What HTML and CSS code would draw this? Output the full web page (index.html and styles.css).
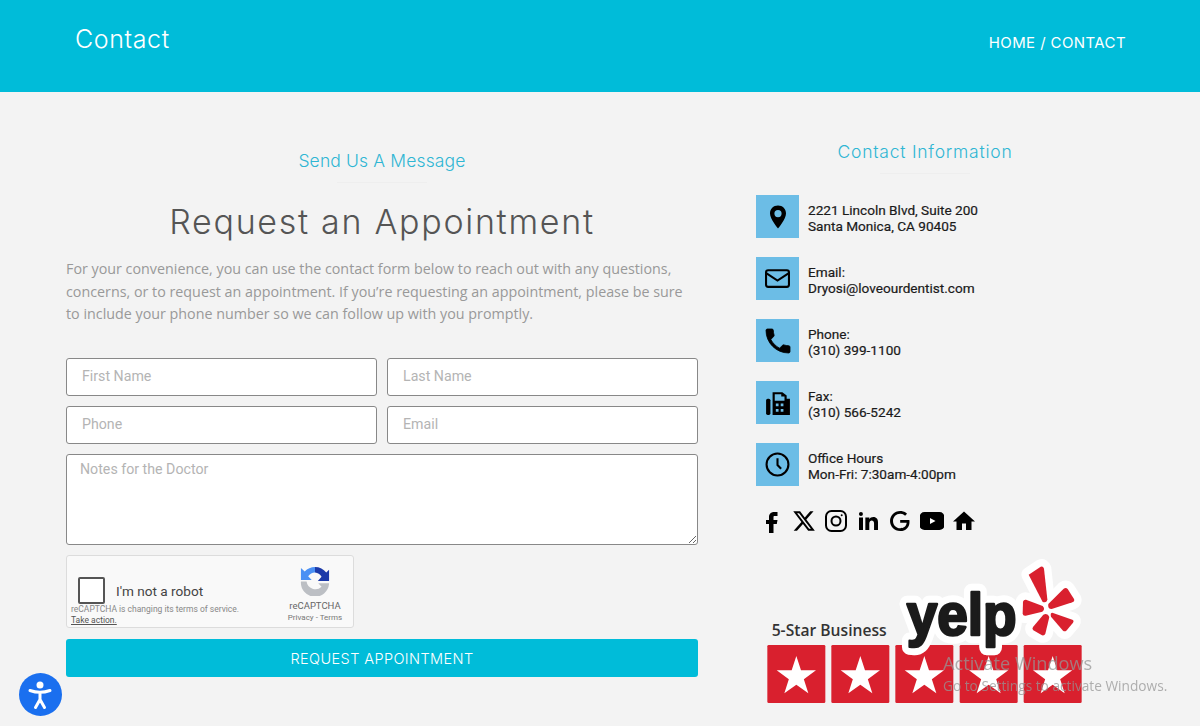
FILE: index.html
```html
<!DOCTYPE html>
<html lang="en">
<head>
    <meta charset="UTF-8">
    <meta name="viewport" content="width=device-width, initial-scale=1.0">
    <title>Contact</title>
    <link rel="stylesheet" href="styles.css">
</head>
<body>
    <header class="page-header">
        <h1>Contact</h1>
        <nav class="crumbs">HOME / CONTACT</nav>
    </header>

    <main class="content">
        <section class="message-col">
            <h2 class="eyebrow">Send Us A Message</h2>
            <div class="rule"></div>
            <h3 class="form-title">Request an Appointment</h3>
            <p class="intro">For your convenience, you can use the contact form below to reach out with any questions, concerns, or to request an appointment. If you’re requesting an appointment, please be sure to include your phone number so we can follow up with you promptly.</p>

            <form class="contact-form">
                <div class="form-row">
                    <input type="text" placeholder="First Name">
                    <input type="text" placeholder="Last Name">
                </div>
                <div class="form-row">
                    <input type="text" placeholder="Phone">
                    <input type="text" placeholder="Email">
                </div>
                <textarea placeholder="Notes for the Doctor"></textarea>

                <div class="captcha">
                    <div class="captcha-left">
                        <div class="captcha-check">
                            <span class="captcha-box"></span>
                            <span class="captcha-label">I'm not a robot</span>
                        </div>
                        <div class="captcha-notice">reCAPTCHA is changing its terms of service.<br><u>Take action.</u></div>
                    </div>
                    <div class="captcha-brand">
                        <svg class="captcha-logo" viewBox="0 0 32 32">
                            <path d="M16 1a15 15 0 0 0-11 4.800L1 2v13h11.500l-3.800-4a10 10 0 0 1 7.300-4z" fill="#4a90f4"/>
                            <path d="M16 1a15 15 0 0 1 12 6l3-3v12H19l4-4.500A9.500 9.500 0 0 0 16 7z" fill="#1c3aa9"/>
                            <path d="M1 16.500h6a9.500 9.500 0 0 0 16 5.500l-3.500-3.500H31v.5a15 15 0 0 1-30-2.500z" fill="#bcbfc4"/>
                        </svg>
                        <div class="captcha-name">reCAPTCHA</div>
                        <div class="captcha-links">Privacy - Terms</div>
                    </div>
                </div>

                <button type="submit">REQUEST APPOINTMENT</button>
            </form>
        </section>

        <aside class="info-col">
            <h2 class="eyebrow eyebrow-wide">Contact Information</h2>
            <div class="rule"></div>

            <ul class="info-list">
                <li>
                    <span class="info-icon">
                        <svg viewBox="0 0 24 24" width="24" height="24"><path fill-rule="evenodd" d="M12 .5C7.300.5 4 4 4 8.500 4 14 12 23.500 12 23.500S20 14 20 8.500C20 4 16.700.5 12 .5zm0 4.500a3.600 3.600 0 1 1 0 7.200 3.600 3.600 0 0 1 0-7.200z"/></svg>
                    </span>
                    <span class="info-text">2221 Lincoln Blvd, Suite 200<br>Santa Monica, CA 90405</span>
                </li>
                <li>
                    <span class="info-icon">
                        <svg viewBox="0 0 24 24" width="25" height="25" fill="none" stroke="#000" stroke-width="2"><rect x="1" y="4" width="22" height="16" rx="2"/><path d="M1.500 7l10.500 7 10.500-7"/></svg>
                    </span>
                    <span class="info-text">Email:<br>Dryosi@loveourdentist.com</span>
                </li>
                <li>
                    <span class="info-icon">
                        <svg viewBox="0 0 24 24" width="32" height="32"><path stroke="#000" stroke-width=".6" d="M6.620 10.790c1.440 2.830 3.760 5.140 6.590 6.590l2.200-2.200c.27-.27.67-.36 1.020-.24 1.120.37 2.330.57 3.570.57.55 0 1 .45 1 1V20c0 .55-.45 1-1 1-9.390 0-17-7.610-17-17 0-.55.45-1 1-1h3.500c.55 0 1 .45 1 1 0 1.250.2 2.450.57 3.570.11.350.03.740-.25 1.020l-2.200 2.200z"/></svg>
                    </span>
                    <span class="info-text">Phone:<br>(310) 399-1100</span>
                </li>
                <li>
                    <span class="info-icon">
                        <svg viewBox="0 0 24 24" width="26" height="26"><rect x="1" y="8" width="4" height="15" rx="1.500"/><path fill-rule="evenodd" d="M7 2h9l4 3v3h3v15H7zM9 4v6h9V6h-3V4zM10 12.500v2.500h2.500v-2.500zm4.500 0v2.500H17v-2.500zM10 17.500V20h2.500v-2.500zm4.500 0V20H17v-2.500z"/></svg>
                    </span>
                    <span class="info-text">Fax:<br>(310) 566-5242</span>
                </li>
                <li>
                    <span class="info-icon">
                        <svg viewBox="0 0 24 24" width="25" height="25" fill="none" stroke="#000" stroke-width="2"><circle cx="12" cy="12" r="10.500"/><path d="M12 6v6.500l3.500 3.500"/></svg>
                    </span>
                    <span class="info-text">Office Hours<br>Mon-Fri: 7:30am-4:00pm</span>
                </li>
            </ul>

            <div class="social">
                <svg viewBox="0 0 24 24"><path d="M14.500 7h3V3h-3.300C10.700 3 9 5.300 9 8v3H6v4h3v9h4.500v-9h3.300l.7-4h-4V8c0-.6.4-1 1-1z"/></svg>
                <svg viewBox="0 0 24 24"><path d="M18.244 2.250h3.308l-7.227 8.260 8.502 11.240H16.170l-5.214-6.817L4.990 21.750H1.680l7.730-8.835L1.254 2.250H8.080l4.713 6.231zm-1.161 17.520h1.833L7.084 4.126H5.117z"/></svg>
                <svg viewBox="0 0 24 24" fill="none" stroke="#000" stroke-width="2"><rect x="2" y="2" width="20" height="20" rx="5.500"/><circle cx="12" cy="12" r="4.500"/><circle cx="17.700" cy="6.300" r="1" fill="#000" stroke="none"/></svg>
                <svg viewBox="0 0 24 24"><path d="M6.940 5a2 2 0 1 1-4-.002 2 2 0 0 1 4 .002zM7 8.480H3V21h4V8.480zm6.320 0H9.340V21h3.940v-6.570c0-3.660 4.770-4 4.770 0V21H22v-7.930c0-6.170-7.060-5.940-8.720-2.910l.04-1.680z"/></svg>
                <svg viewBox="0 0 24 24"><path d="M21.350 11.100h-9.170v2.730h6.510c-.33 3.810-3.500 5.440-6.500 5.440C8.360 19.270 5 16.250 5 12c0-4.100 3.200-7.270 7.200-7.270 3.090 0 4.900 1.970 4.900 1.970L19 4.720S16.560 2 12.100 2C6.420 2 2.030 6.800 2.030 12c0 5.050 4.130 10 10.220 10 5.350 0 9.250-3.670 9.250-9.090 0-1.150-.15-1.810-.15-1.810z"/></svg>
                <svg viewBox="0 0 24 24"><rect x="-.5" y="3" width="25" height="18" rx="5"/><path d="M10 9l5.500 3-5.500 3z" fill="#fff"/></svg>
                <svg viewBox="0 0 24 24"><path d="M10 21v-6.500h4V21h5.500v-8.500H23L12 2.500 1 12.500h3.500V21z"/></svg>
            </div>

            <svg class="yelp" viewBox="0 0 1320 528">
                <defs>
                    <path id="star" d="M0-62L14-19H59L22.500 7.500 36 50 0 24-36 50-22.500 7.500-59-19H-14z"/>
                    <g id="burst">
                        <path d="M836 74l36-24q7-3 10 6l10 92q-1 12-14 8z"/>
                        <path d="M895 162l46-46q7-5 12 1l19 30q3 7-5 10l-62 20q-13 0-10-15z"/>
                        <path d="M878 168l-50-19q-7-1-9 6l-1 36q1 7 9 6l50-12q10-8 1-17z"/>
                        <path d="M880 194l-31 37q-4 5 1 10l26 15q7 2 10-5l12-50q-5-13-18-7z"/>
                        <path d="M907 188l60 21q6 3 2 9l-20 24q-5 4-10 0l-36-42q-3-12 4-12z"/>
                    </g>
                </defs>
                <g fill="#d9202e">
                    <rect x="52" y="285" width="174" height="174" rx="4"/>
                    <rect x="244" y="285" width="174" height="174" rx="4"/>
                    <rect x="436" y="285" width="174" height="174" rx="4"/>
                    <rect x="629" y="285" width="174" height="174" rx="4"/>
                    <rect x="821" y="285" width="174" height="174" rx="4"/>
                </g>
                <g fill="#fff">
                    <use href="#star" x="139" y="380"/>
                    <use href="#star" x="331" y="380"/>
                    <use href="#star" x="523" y="380"/>
                    <use href="#star" x="716" y="380"/>
                    <use href="#star" x="908" y="380"/>
                </g>
                <text class="yelp-tag" x="65" y="258" textLength="345" lengthAdjust="spacingAndGlyphs">5-Star Business</text>
                <use href="#burst" class="burst-halo"/>
                <text class="yelp-halo" x="470" y="255" textLength="330" lengthAdjust="spacingAndGlyphs">yelp</text>
                <text class="yelp-word" x="470" y="255" textLength="330" lengthAdjust="spacingAndGlyphs">yelp</text>
                <use href="#burst" class="burst-fill"/>
            </svg>
        </aside>
    </main>

    <div class="activate">
        <div class="activate-title">Activate Windows</div>
        <div class="activate-sub">Go to Settings to activate Windows.</div>
    </div>

    <div class="a11y">
        <svg viewBox="0 0 43 43" width="43" height="43">
            <circle cx="21" cy="12" r="3.500" fill="#fff"/>
            <path d="M11 17.500q10 3.500 20 0M21 20v6.500M21 26.500l-4.500 8M21 26.500l4.500 8" fill="none" stroke="#fff" stroke-width="3" stroke-linecap="round" stroke-linejoin="round"/>
        </svg>
    </div>
</body>
</html>
```

FILE: styles.css
```css
* {
    box-sizing: border-box;
}
html, body {
    height: 100%;
}
body {
    margin: 0;
    overflow: hidden;
    background-color: #f3f3f3;
    font-family: "Roboto", Arial, sans-serif;
}
h1, h2, h3, p, ul {
    margin: 0;
    padding: 0;
}

.page-header {
    height: 92px;
    padding: 25px 74px 0 75px;
    display: flex;
    justify-content: space-between;
    align-items: flex-start;
    background-color: #00bcd9;
    color: #fff;
}
.page-header h1 {
    font-family: "Inter", Arial, sans-serif;
    font-size: 25px;
    font-weight: 300;
    line-height: 29px;
    letter-spacing: 0.6px;
}
.crumbs {
    margin-top: 8px;
    font-family: "Inter", Arial, sans-serif;
    font-size: 15px;
    font-weight: 400;
    line-height: 20px;
    letter-spacing: 0.4px;
}

.content {
    display: flex;
    padding-left: 66px;
}
.message-col {
    width: 632px;
    padding-top: 58px;
}
.info-col {
    width: 338px;
    margin-left: 58px;
    padding-top: 49px;
}

.eyebrow {
    font-family: "Inter", Arial, sans-serif;
    font-size: 17.5px;
    font-weight: 300;
    line-height: 22px;
    letter-spacing: 0.14px;
    text-align: center;
    color: #2fb6d3;
}
.eyebrow-wide {
    letter-spacing: 0.76px;
}
.rule {
    width: 90px;
    height: 1px;
    margin: 10px auto 0;
    background-color: #eeeeee;
}

.form-title {
    margin-top: 18px;
    font-family: "Inter", Arial, sans-serif;
    font-size: 34px;
    font-weight: 300;
    line-height: 42px;
    letter-spacing: 1.7px;
    text-align: center;
    color: #555;
}
.intro {
    margin-top: 15px;
    font-family: "Open Sans", Arial, sans-serif;
    font-size: 14.3px;
    line-height: 22.7px;
    color: #999;
}

.contact-form {
    margin-top: 32px;
}
.form-row {
    display: flex;
    gap: 10px;
    margin-bottom: 10px;
}
input[type="text"], textarea {
    display: block;
    border: 1px solid #888;
    border-radius: 3px;
    background-color: #fff;
    font-family: "Roboto", Arial, sans-serif;
    font-size: 14.2px;
    color: #333;
}
input[type="text"] {
    flex: 1;
    min-width: 0;
    height: 38px;
    padding: 0 15px 2px;
}
textarea {
    width: 100%;
    height: 91px;
    padding: 6px 13px;
}
::placeholder {
    color: #b4b4b4;
    opacity: 1;
}

.captcha {
    display: flex;
    justify-content: space-between;
    width: 288px;
    height: 73px;
    margin-top: 10px;
    padding-left: 4px;
    border: 1px solid #dcdcdc;
    border-radius: 3px;
    background-color: #f9f9f9;
}
.captcha-left {
    padding-top: 21px;
}
.captcha-check {
    display: flex;
    align-items: center;
    margin-left: 7px;
}
.captcha-box {
    width: 27px;
    height: 27px;
    border: 2px solid #555;
    border-radius: 2px;
    background-color: #fff;
}
.captcha-label {
    margin-left: 11px;
    font-size: 13.6px;
    color: #444;
}
.captcha-notice {
    font-size: 8.5px;
    line-height: 11px;
    color: #888;
}
.captcha-notice u {
    color: #555;
}
.captcha-brand {
    width: 76px;
    padding-top: 10px;
    text-align: center;
}
.captcha-logo {
    display: block;
    width: 30px;
    height: 30px;
    margin: 0 auto;
}
.captcha-name {
    margin-top: 4px;
    font-size: 9.5px;
    line-height: 12px;
    color: #666;
}
.captcha-links {
    font-size: 8px;
    line-height: 12px;
    color: #777;
}

.contact-form button {
    display: block;
    width: 100%;
    height: 38px;
    margin-top: 11px;
    border: none;
    border-radius: 3px;
    background-color: #00bcd9;
    font-family: "Inter", Arial, sans-serif;
    font-size: 14.5px;
    font-weight: 300;
    letter-spacing: 0.4px;
    color: #fff;
    cursor: pointer;
}

.info-list {
    margin-top: 21px;
    list-style: none;
}
.info-list li {
    display: flex;
    align-items: center;
    gap: 9px;
    margin-bottom: 19px;
    font-size: 13.6px;
    font-weight: 400;
    line-height: 16.500px;
    color: #1a1a1a;
    -webkit-text-stroke: 0.2px #1a1a1a;
}
.info-text {
    margin-top: 3px;
}
.info-icon {
    display: flex;
    flex: none;
    align-items: center;
    justify-content: center;
    width: 43px;
    height: 43px;
    background-color: #6cbde6;
}

.social {
    display: flex;
    gap: 8px;
    margin-top: 23px;
    padding-left: 4px;
}
.social svg {
    width: 24px;
    height: 24px;
}

.yelp {
    display: block;
    width: 440px;
    height: 176px;
    margin: 17px 0 0 -6px;
}
.yelp-tag {
    font-family: "Open Sans", Arial, sans-serif;
    font-size: 46px;
    font-weight: 600;
    fill: #333;
}
.yelp-word, .yelp-halo {
    font-family: "Liberation Sans", Arial, sans-serif;
    font-size: 180px;
    font-weight: 700;
}
.yelp-word {
    fill: #1b1b1b;
    stroke: #1b1b1b;
    stroke-width: 8px;
    stroke-linejoin: round;
}
.yelp-halo {
    fill: #fff;
    stroke: #fff;
    stroke-width: 50px;
    stroke-linejoin: round;
}
.burst-halo {
    fill: #fff;
    stroke: #fff;
    stroke-width: 44px;
    stroke-linejoin: round;
}
.burst-fill {
    fill: #d9202e;
}

.activate {
    position: fixed;
    left: 943px;
    top: 652px;
    font-family: "Open Sans", Arial, sans-serif;
    color: rgba(150, 150, 150, 0.75);
}
.activate-title {
    font-size: 18.2px;
    line-height: 23px;
}
.activate-sub {
    font-size: 13.7px;
    line-height: 21px;
}

.a11y {
    position: fixed;
    left: 19px;
    top: 673px;
    width: 43px;
    height: 43px;
    border-radius: 50%;
    background-color: #1a6fef;
}
.a11y svg {
    display: block;
}
```
